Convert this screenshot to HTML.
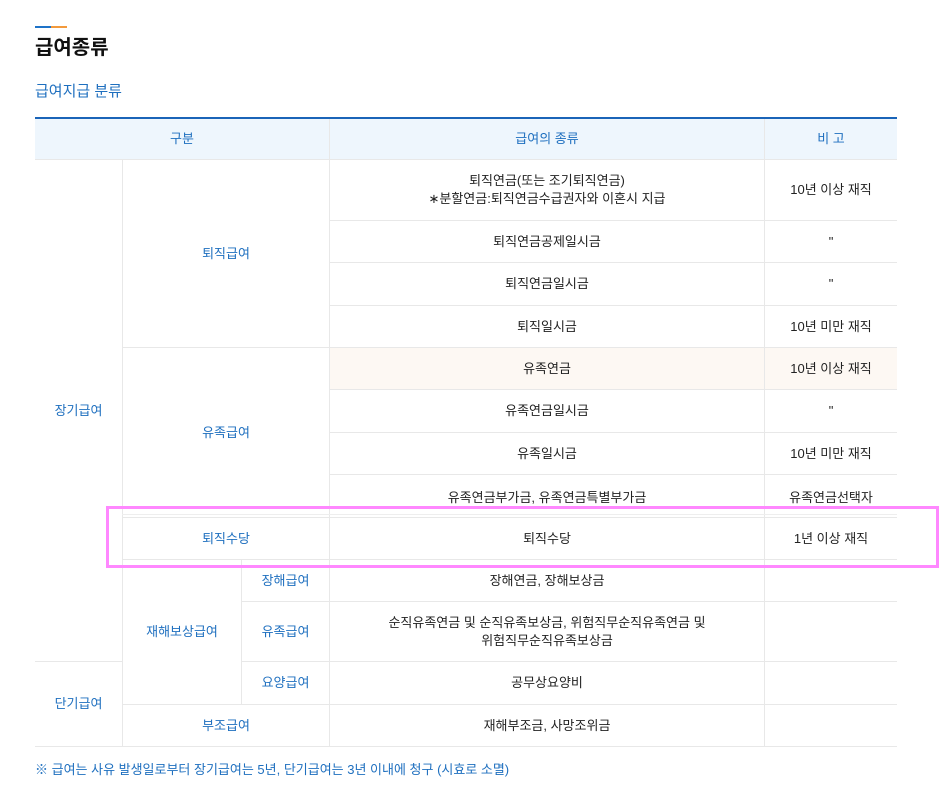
<!DOCTYPE html>
<html><head><meta charset="utf-8">
<style>
*{margin:0;padding:0;box-sizing:border-box}
body{width:940px;height:789px;background:#fff;position:relative;overflow:hidden;font-family:"Liberation Sans","Noto Sans CJK KR",sans-serif;color:#222}
.c{position:absolute;display:flex;align-items:center;justify-content:center;text-align:center;font-size:13px;line-height:18px;border-bottom:1px solid #e8e8e8;border-left:1px solid #e8e8e8}
.b{color:#1e6fbf}
.nl{border-left:none}
</style></head><body>
<div style="position:absolute;left:35px;top:26px;width:16px;height:2px;background:#1e73c8"></div>
<div style="position:absolute;left:51px;top:26px;width:16px;height:2px;background:#f39a3c"></div>
<div style="position:absolute;left:35px;top:34px;font-size:20px;font-weight:bold;color:#111;line-height:28px">급여종류</div>
<div style="position:absolute;left:35px;top:82px;font-size:15px;color:#1e6fbf;line-height:20px">급여지급 분류</div>
<div style="position:absolute;left:35px;top:117px;width:862px;height:2px;background:#1a64b8"></div>
<div style="position:absolute;left:35px;top:119px;width:862px;height:40px;background:#eef6fd"></div>
<div class="c b nl" style="left:35px;top:119px;width:294px;height:41px">구분</div>
<div class="c b" style="left:329px;top:119px;width:435px;height:41px">급여의 종류</div>
<div class="c b" style="left:764px;top:119px;width:133px;height:41px">비 고</div>

<div class="c b nl" style="left:35px;top:160px;width:87px;height:502px">장기급여</div>
<div class="c b nl" style="left:35px;top:662px;width:87px;height:85px">단기급여</div>

<div class="c b" style="left:122px;top:160px;width:207px;height:188px">퇴직급여</div>
<div class="c b" style="left:122px;top:348px;width:207px;height:170px">유족급여</div>
<div class="c b" style="left:122px;top:518px;width:207px;height:42px">퇴직수당</div>
<div class="c b" style="left:122px;top:560px;width:119px;height:145px">재해보상급여</div>
<div class="c b" style="left:241px;top:560px;width:88px;height:42px">장해급여</div>
<div class="c b" style="left:241px;top:602px;width:88px;height:60px">유족급여</div>
<div class="c b" style="left:241px;top:662px;width:88px;height:43px">요양급여</div>
<div class="c b" style="left:122px;top:705px;width:207px;height:42px">부조급여</div>

<div class="c" style="left:329px;top:160px;width:435px;height:61px">퇴직연금(또는 조기퇴직연금)<br>∗분할연금:퇴직연금수급권자와 이혼시 지급</div>
<div class="c" style="left:764px;top:160px;width:133px;height:61px">10년 이상 재직</div>
<div class="c" style="left:329px;top:221px;width:435px;height:42px">퇴직연금공제일시금</div>
<div class="c" style="left:764px;top:221px;width:133px;height:42px">"</div>
<div class="c" style="left:329px;top:263px;width:435px;height:43px">퇴직연금일시금</div>
<div class="c" style="left:764px;top:263px;width:133px;height:43px">"</div>
<div class="c" style="left:329px;top:306px;width:435px;height:42px">퇴직일시금</div>
<div class="c" style="left:764px;top:306px;width:133px;height:42px">10년 미만 재직</div>
<div class="c" style="left:329px;top:348px;width:435px;height:42px;background:#fdf8f3">유족연금</div>
<div class="c" style="left:764px;top:348px;width:133px;height:42px;background:#fdf8f3">10년 이상 재직</div>
<div class="c" style="left:329px;top:390px;width:435px;height:43px">유족연금일시금</div>
<div class="c" style="left:764px;top:390px;width:133px;height:43px">"</div>
<div class="c" style="left:329px;top:433px;width:435px;height:42px">유족일시금</div>
<div class="c" style="left:764px;top:433px;width:133px;height:42px">10년 미만 재직</div>
<div class="c" style="left:329px;top:475px;width:435px;height:43px;padding-top:4px">유족연금부가금, 유족연금특별부가금</div>
<div class="c" style="left:764px;top:475px;width:133px;height:43px;padding-top:4px">유족연금선택자</div>
<div style="position:absolute;left:122px;top:514px;width:775px;height:1px;background:#eee"></div>
<div class="c" style="left:329px;top:518px;width:435px;height:42px">퇴직수당</div>
<div class="c" style="left:764px;top:518px;width:133px;height:42px">1년 이상 재직</div>
<div class="c" style="left:329px;top:560px;width:435px;height:42px">장해연금, 장해보상금</div>
<div class="c" style="left:764px;top:560px;width:133px;height:42px"></div>
<div class="c" style="left:329px;top:602px;width:435px;height:60px">순직유족연금 및 순직유족보상금, 위험직무순직유족연금 및<br>위험직무순직유족보상금</div>
<div class="c" style="left:764px;top:602px;width:133px;height:60px"></div>
<div class="c" style="left:329px;top:662px;width:435px;height:43px">공무상요양비</div>
<div class="c" style="left:764px;top:662px;width:133px;height:43px"></div>
<div class="c" style="left:329px;top:705px;width:435px;height:42px">재해부조금, 사망조위금</div>
<div class="c" style="left:764px;top:705px;width:133px;height:42px"></div>

<div style="position:absolute;left:106px;top:506px;width:833px;height:62px;border:3px solid #ff88ff"></div>
<div style="position:absolute;left:35px;top:761px;font-size:13px;color:#1e6fbf;line-height:18px">※ 급여는 사유 발생일로부터 장기급여는 5년, 단기급여는 3년 이내에 청구 (시효로 소멸)</div>
</body></html>
